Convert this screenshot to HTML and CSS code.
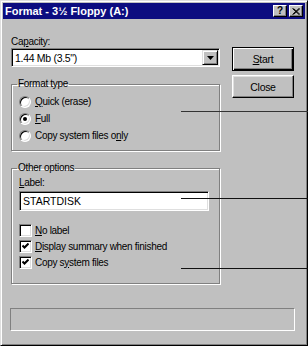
FILE: index.html
```html
<!DOCTYPE html>
<html>
<head>
<meta charset="utf-8">
<link rel="stylesheet" href="styles.css">
</head>
<body>
<div class="window">
  <div class="titlebar">
    <span class="title">Format - 3½ Floppy (A:)</span>
    <div class="tbtns">
      <span class="tbtn help">?</span>
      <span class="tbtn"><svg width="8" height="7" viewBox="0 0 8 7"><path d="M0.5 0.5 L7 6.5 M1.5 0.5 L8 6.5 M7 0.5 L0.5 6.5 M8 0.5 L1.5 6.5" stroke="#000" stroke-width="1"/></svg></span>
    </div>
  </div>
  <div class="main">
    <div class="left">
      <div class="lbl">Ca<u>p</u>acity:</div>
      <div class="combo">
        <span class="combo-text">1.44 Mb (3.5")</span>
        <span class="combo-btn"><svg width="7" height="4" viewBox="0 0 7 4"><path d="M0 0 H7 L3.5 4 Z" fill="#000"/></svg></span>
      </div>
      <fieldset class="group fmt">
        <legend>Format type</legend>
        <div class="opt"><span class="radio"></span><span><u>Q</u>uick (erase)</span></div>
        <div class="opt"><span class="radio on"></span><span><u>F</u>ull</span></div>
        <div class="opt"><span class="radio"></span><span>Copy system files o<u>n</u>ly</span></div>
      </fieldset>
      <fieldset class="group other">
        <legend>Other options</legend>
        <div class="lbl"><u>L</u>abel:</div>
        <div class="field">STARTDISK</div>
        <div class="chk-list">
          <div class="opt chk"><span class="box"></span><span><u>N</u>o label</span></div>
          <div class="opt chk"><span class="box"><svg width="7" height="7" viewBox="0 0 7 7"><path d="M0.5 2.5 L2.5 4.5 L6.5 0.5" stroke="#000" stroke-width="2" fill="none"/></svg></span><span><u>D</u>isplay summary when finished</span></div>
          <div class="opt chk"><span class="box"><svg width="7" height="7" viewBox="0 0 7 7"><path d="M0.5 2.5 L2.5 4.5 L6.5 0.5" stroke="#000" stroke-width="2" fill="none"/></svg></span><span>Copy s<u>y</u>stem files</span></div>
        </div>
      </fieldset>
    </div>
    <div class="buttons">
      <div class="btn default"><u>S</u>tart</div>
      <div class="btn">Close</div>
    </div>
  </div>
  <div class="progress"></div>
  <div class="callout c1"></div>
  <div class="callout c2"></div>
  <div class="callout c3"></div>
</div>
</body>
</html>
```
FILE: styles.css
```css
html, body {
  margin: 0;
  padding: 0;
  background: #c0c0c0;
}

.window {
  position: relative;
  width: 308px;
  height: 346px;
  box-sizing: border-box;
  background: #c0c0c0;
  border-top: 1px solid #dfdfdf;
  border-left: 1px solid #dfdfdf;
  border-right: 1px solid #000;
  border-bottom: 1px solid #000;
  box-shadow: inset 1px 1px #fff, inset -1px -1px #808080;
  padding: 2px;
  font-family: "Liberation Sans", Arial, sans-serif;
  font-size: 10px;
  letter-spacing: -0.3px;
  color: #000;
}

.titlebar {
  height: 16px;
  background: #0c0c80;
  display: flex;
  align-items: center;
  justify-content: space-between;
  padding: 0 2px 0 2px;
}

.title {
  color: #fff;
  font-weight: bold;
  font-size: 11px;
  letter-spacing: 0;
}

.tbtns {
  display: flex;
  gap: 2px;
}

.tbtn {
  width: 14px;
  height: 12px;
  box-sizing: border-box;
  background: #c0c0c0;
  border: 1px solid;
  border-color: #fff #000 #000 #fff;
  box-shadow: inset -1px -1px #808080;
  display: flex;
  align-items: center;
  justify-content: center;
  font-weight: bold;
  font-size: 10px;
  line-height: 10px;
  letter-spacing: 0;
}

.main {
  display: flex;
  padding: 17px 0 0 8px;
}

.left {
  width: 210px;
}

.lbl {
  height: 12px;
  line-height: 12px;
}

.combo {
  height: 19px;
  box-sizing: border-box;
  width: 209px;
  display: flex;
  align-items: center;
  background: #fff;
  border: 1px solid;
  border-color: #808080 #fff #fff #808080;
  box-shadow: inset 1px 1px #000, inset -1px -1px #dfdfdf;
  padding: 1px;
}

.combo-text {
  flex: 1;
  padding-left: 2px;
  font-size: 10.5px;
}

.combo-btn {
  width: 16px;
  height: 15px;
  box-sizing: border-box;
  background: #c0c0c0;
  border: 1px solid;
  border-color: #dfdfdf #000 #000 #dfdfdf;
  box-shadow: inset 1px 1px #fff, inset -1px -1px #808080;
  display: flex;
  align-items: center;
  justify-content: center;
}

.group {
  box-sizing: border-box;
  width: 209px;
  margin: 11px 0 0 0;
  border: 1px solid #808080;
  box-shadow: inset 1px 1px #fff, 1px 1px #fff;
  padding: 3px 4px 6px 7px;
  min-inline-size: 0;
}

.group legend {
  padding: 0 1px;
  margin-left: -2px;
  line-height: 12px;
  height: 12px;
}

.opt {
  height: 17px;
  display: flex;
  align-items: center;
  gap: 4px;
}

.radio {
  width: 12px;
  height: 12px;
  box-sizing: border-box;
  border-radius: 50%;
  background: #fff;
  border: 1px solid;
  border-color: #808080 #fff #fff #808080;
  box-shadow: inset 1px 1px #000, inset -1px -1px #dfdfdf;
  display: flex;
  align-items: center;
  justify-content: center;
}

.radio.on::after {
  content: "";
  width: 4px;
  height: 4px;
  border-radius: 50%;
  background: #000;
}

.other {
  padding-bottom: 13px;
}

.field {
  margin-top: 2px;
  height: 20px;
  width: 190px;
  box-sizing: border-box;
  background: #fff;
  border: 1px solid;
  border-color: #808080 #fff #fff #808080;
  box-shadow: inset 1px 1px #000, inset -1px -1px #dfdfdf;
  padding-left: 3px;
  line-height: 18px;
  font-size: 10.5px;
  letter-spacing: 0;
}

.chk-list {
  margin-top: 11px;
}

.opt.chk {
  height: 16px;
  gap: 3px;
}

.box {
  width: 13px;
  height: 13px;
  box-sizing: border-box;
  background: #fff;
  border: 1px solid;
  border-color: #808080 #fff #fff #808080;
  box-shadow: inset 1px 1px #000, inset -1px -1px #dfdfdf;
  display: flex;
  align-items: center;
  justify-content: center;
}

.buttons {
  margin: 11px 0 0 11px;
  width: 62px;
  display: flex;
  flex-direction: column;
  gap: 4px;
}

.btn {
  height: 23px;
  box-sizing: border-box;
  display: flex;
  align-items: center;
  justify-content: center;
  border: 1px solid;
  border-color: #fff #000 #000 #fff;
  box-shadow: inset -1px -1px #808080, inset 1px 1px #dfdfdf;
  font-size: 10.5px;
}

.btn.default {
  height: 24px;
  border-color: #000;
  box-shadow: inset 1px 1px #fff, inset -1px -1px #000, inset -2px -2px #808080;
}

.progress {
  margin: 24px 0 0 7px;
  width: 285px;
  height: 23px;
  box-sizing: border-box;
  border-top: 1px solid #808080;
  border-left: 1px solid #808080;
  border-right: 1px solid #fff;
  border-bottom: 1px solid #fff;
}

.callout {
  position: absolute;
  left: 180px;
  width: 127px;
  height: 1px;
  background: #111;
}

.c1 { top: 110px; background: #333; }
.c2 { top: 197px; }
.c3 { top: 267px; }
```
